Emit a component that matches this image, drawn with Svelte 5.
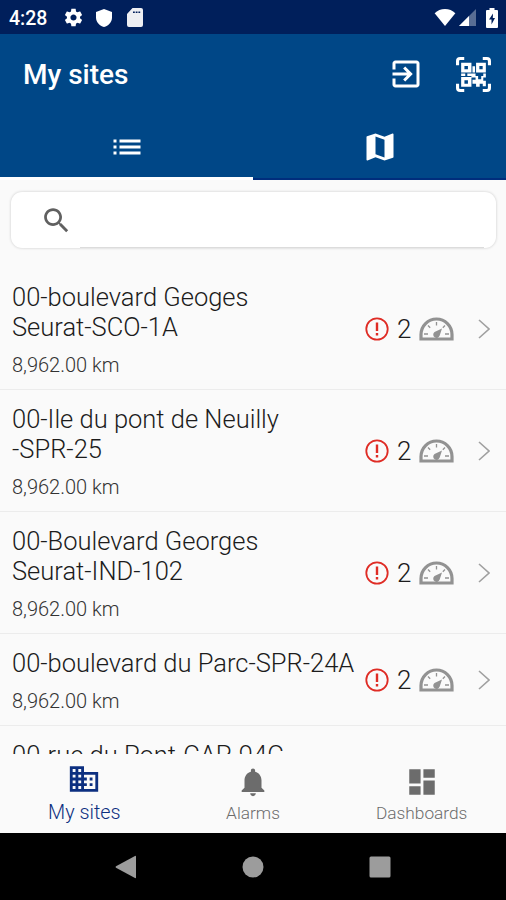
<script>
  const sites = [
    { name: ['00-boulevard Geoges', 'Seurat-SCO-1A'], distance: '8,962.00 km', alarms: 2 },
    { name: ['00-Ile du pont de Neuilly', '-SPR-25'], distance: '8,962.00 km', alarms: 2 },
    { name: ['00-Boulevard Georges', 'Seurat-IND-102'], distance: '8,962.00 km', alarms: 2 },
    { name: ['00-boulevard du Parc-SPR-24A'], distance: '8,962.00 km', alarms: 2 },
    { name: ['00-rue du Pont-CAP-94C'], distance: '8,962.00 km', alarms: 2 }
  ];

  const navItems = [
    {
      label: 'My sites',
      icon: 'M12 7V3H2v18h20V7H12zM6 19H4v-2h2v2zm0-4H4v-2h2v2zm0-4H4V9h2v2zm0-4H4V5h2v2zm4 12H8v-2h2v2zm0-4H8v-2h2v2zm0-4H8V9h2v2zm0-4H8V5h2v2zm10 12h-8v-2h2v-2h-2v-2h2v-2h-2V9h8v10zm-2-8h-2v2h2v-2zm0 4h-2v2h2v-2z'
    },
    {
      label: 'Alarms',
      icon: 'M12 22c1.1 0 2-.9 2-2h-4c0 1.1.89 2 2 2zm6-6v-5c0-3.07-1.64-5.64-4.5-6.32V4c0-.83-.67-1.5-1.5-1.5s-1.5.67-1.5 1.5v.68C7.63 5.36 6 7.92 6 11v5l-2 2v1h16v-1l-2-2z'
    },
    {
      label: 'Dashboards',
      icon: 'M3 13h8V3H3v10zm0 8h8v-6H3v6zm10 0h8V11h-8v10zm0-18v6h8V3h-8z'
    }
  ];

  let activeTab = $state('list');
  let activeNav = $state('My sites');
  let query = $state('');
</script>

<div class="screen">
  <div class="status-bar">
    <span class="time">4:28</span>
    <svg class="gear" viewBox="0 0 24 24"><path d="M19.43 12.98c.04-.32.07-.64.07-.98s-.03-.66-.07-.98l2.11-1.65c.19-.15.24-.42.12-.64l-2-3.46c-.12-.22-.39-.3-.61-.22l-2.49 1c-.52-.4-1.08-.73-1.69-.98l-.38-2.65C14.46 2.18 14.25 2 14 2h-4c-.25 0-.46.18-.49.42l-.38 2.65c-.61.25-1.17.59-1.69.98l-2.49-1c-.23-.09-.49 0-.61.22l-2 3.46c-.13.22-.07.49.12.64l2.11 1.65c-.04.32-.07.65-.07.98s.03.66.07.98l-2.11 1.65c-.19.15-.24.42-.12.64l2 3.46c.12.22.39.3.61.22l2.49-1c.52.4 1.08.73 1.69.98l.38 2.65c.03.24.24.42.49.42h4c.25 0 .46-.18.49-.42l.38-2.65c.61-.25 1.17-.59 1.69-.98l2.49 1c.23.09.49 0 .61-.22l2-3.46c.12-.22.07-.49-.12-.64l-2.11-1.65zM12 15.5c-1.93 0-3.5-1.57-3.5-3.5s1.57-3.5 3.5-3.5 3.5 1.57 3.5 3.5-1.57 3.5-3.5 3.5z" /></svg>
    <svg class="shield" viewBox="0 0 16 18"><path d="M8 0 16 3v5.5C16 13 12.5 16.8 8 18 3.5 16.8 0 13 0 8.5V3z" /></svg>
    <svg class="sd" viewBox="0 0 16 19"><path fill-rule="evenodd" d="M5.5 0H14q2 0 2 2v15q0 2-2 2H2q-2 0-2-2V6zM6 3.5v1.5h1.8V3.5zm2.7 0v1.5h1.8V3.5zm2.7 0v1.5h1.8V3.5z" /></svg>
    <span class="spacer"></span>
    <svg class="wifi" viewBox="0 0 22 18"><path d="M11 18 0 4.5C3 1.5 6.8 0 11 0s8 1.5 11 4.5z" /></svg>
    <svg class="signal" viewBox="0 0 17 17"><path opacity=".35" d="M0 17 17 0v17z" /><path d="M0 17 10 7v10z" /></svg>
    <svg class="battery" viewBox="0 0 12 20"><path fill-rule="evenodd" d="M3.5 0h5v2H11q1 0 1 1v16q0 1-1 1H1q-1 0-1-1V3q0-1 1-1h2.5zM7 5.5 3 11.5h2.500V16.5L9 10H6.800z" /></svg>
  </div>

  <header>
    <div class="app-bar">
      <h1>My sites</h1>
      <button type="button" class="exit" aria-label="Log out">
        <svg viewBox="0 0 24 24"><path d="M10.09 15.59 11.5 17l5-5-5-5-1.41 1.41L12.67 11H3v2h9.67l-2.58 2.59zM19 3H5c-1.11 0-2 .9-2 2v4h2V5h14v14H5v-4H3v4c0 1.1.89 2 2 2h14c1.1 0 2-.9 2-2V5c0-1.1-.9-2-2-2z" /></svg>
      </button>
      <button type="button" class="qr" aria-label="Scan code">
        <svg viewBox="0 0 34 34">
          <path class="frame" d="M1.5 8V4q0-2.5 2.5-2.5h4M26 1.5h4q2.5 0 2.5 2.5v4M32.5 26v4q0 2.5-2.5 2.5h-4M8 32.5H4q-2.5 0-2.5-2.5v-4" />
          <path fill-rule="evenodd" d="M5 5.500h10V15H5zm3.200 3.200v3.200h3.400V8.700zM19.500 5.500h9.500V15h-9.500zm3.200 3.200v3.200h3.200V8.700zM5 19.500h10V29H5zm3.200 3.200v3.200h3.400v-3.200zM16 9h2.500v6H16zM5 16h4v2.500H5zM11 16h8v2.500h2.500v3h3v-3h2V16H29v4h-2.500v3H29v5.500h-3V26h-3v3h-3.500v-3H16v-4h3v-2h-4v-1.500h-4z" />
        </svg>
      </button>
    </div>
    <div class="tabs">
      <button type="button" class:active={activeTab === 'list'} aria-label="List" onclick={() => (activeTab = 'list')}>
        <svg viewBox="0 0 24 24"><path d="M3 13h2v-2H3v2zm0 4h2v-2H3v2zm0-8h2V7H3v2zm4 4h14v-2H7v2zm0 4h14v-2H7v2zM7 7v2h14V7H7z" /></svg>
      </button>
      <button type="button" class:active={activeTab === 'map'} aria-label="Map" onclick={() => (activeTab = 'map')}>
        <svg viewBox="0 0 24 24"><path d="M20.5 3l-.16.03L15 5.1 9 3 3.36 4.9c-.21.07-.36.25-.36.48V20.5c0 .28.22.5.5.5l.16-.03L9 18.9l6 2.1 5.64-1.9c.21-.07.36-.25.36-.48V3.5c0-.28-.22-.5-.5-.5zM15 19l-6-2.11V5l6 2.11V19z" /></svg>
      </button>
    </div>
  </header>

  <main>
    <label class="search">
      <svg viewBox="0 0 24 24"><path d="M15.5 14h-.79l-.28-.27C15.41 12.59 16 11.11 16 9.5 16 5.91 13.09 3 9.5 3S3 5.91 3 9.5 5.91 16 9.5 16c1.61 0 3.09-.59 4.23-1.57l.27.28v.79l5 4.99L20.49 19l-4.99-5zm-6 0C7.01 14 5 11.99 5 9.5S7.01 5 9.5 5 14 7.01 14 9.5 11.99 14 9.5 14z" /></svg>
      <input type="text" aria-label="Search" bind:value={query} />
    </label>

    <ul>
      {#each sites as site}
        <li>
          <div class="info">
            <div class="name">
              {#each site.name as line}
                <span>{line}</span>
              {/each}
            </div>
            <div class="distance">{site.distance}</div>
          </div>
          <div class="state">
            <svg class="alert" viewBox="0 0 24 24">
              <circle cx="12" cy="12" r="10.7" />
              <path d="M12 5.500v8.500M12 16v2.500" />
            </svg>
            <span class="count">{site.alarms}</span>
            <svg class="gauge" viewBox="0 0 35 24">
              <path class="dial" d="M2 22V17.5a15.5 15.5 0 0 1 31 0V22z" />
              <path class="ticks" d="M5 17h4M26 17h4M17.5 5v3.500M9 8.500l2.200 2.200M26 8.500l-2.200 2.200" />
              <path class="needle" d="M23 11.500 20.700 18.500a3.300 3.300 0 1 1-5.200-3.500z" />
            </svg>
            <svg class="chevron" viewBox="0 0 12 20"><path d="M1 1l10 9-10 9" /></svg>
          </div>
        </li>
      {/each}
    </ul>
  </main>

  <nav>
    {#each navItems as item}
      <button type="button" class:active={activeNav === item.label} onclick={() => (activeNav = item.label)}>
        <svg viewBox="0 0 24 24"><path d={item.icon} /></svg>
        <span>{item.label}</span>
      </button>
    {/each}
  </nav>

  <div class="system-bar">
    <svg viewBox="0 0 24 24"><path d="M22 1.5v21q0 1-1 .5L2 12.8q-1-.8 0-1.600L21 1q1-.5 1 .5z" /></svg>
    <svg viewBox="0 0 24 24"><circle cx="12" cy="12" r="10.5" /></svg>
    <svg viewBox="0 0 24 24"><rect x="1.5" y="1.5" width="21" height="21" rx="1.5" /></svg>
  </div>
</div>

<style>
  :global(body) {
    background: #fafafa;
  }

  .screen {
    display: flex;
    flex-direction: column;
    box-sizing: border-box;
    width: 506px;
    height: 900px;
    overflow: hidden;
    background: #fafafa;
    color: #1c1c1c;
    font-family: Roboto, sans-serif;
  }

  svg {
    display: block;
    flex: none;
    fill: currentColor;
  }

  button {
    padding: 0;
    border: 0;
    background: none;
    color: inherit;
    font: inherit;
    cursor: pointer;
  }

  .status-bar {
    display: flex;
    flex: none;
    align-items: center;
    box-sizing: border-box;
    height: 34px;
    padding: 1px 8px 0 9px;
    background: #001f5b;
    color: #fff;
  }

  .time {
    width: 54px;
    padding-top: 1px;
    font-size: 19.5px;
    font-weight: 500;
  }

  .gear {
    width: 21px;
    height: 21px;
    margin-right: 12px;
  }

  .shield {
    width: 16px;
    height: 18px;
    margin-right: 15px;
  }

  .sd {
    width: 16px;
    height: 19px;
    opacity: 0.93;
  }

  .spacer {
    flex: 1;
  }

  .wifi {
    width: 22px;
    height: 17px;
    margin-right: 3px;
  }

  .signal {
    width: 17px;
    height: 17px;
    margin-right: 10px;
  }

  .battery {
    width: 12px;
    height: 20px;
  }

  header {
    flex: none;
    height: 146px;
    background: #004787;
    color: #fff;
  }

  .app-bar {
    display: flex;
    align-items: center;
    height: 80px;
    padding: 0 15px 0 23px;
  }

  h1 {
    flex: 1;
    margin: 0;
    font-size: 28px;
    font-weight: 500;
  }

  .exit {
    margin-right: 32px;
  }

  .exit svg {
    width: 36px;
    height: 36px;
  }

  .qr svg {
    width: 35px;
    height: 35px;
  }

  .frame {
    fill: none;
    stroke: currentColor;
    stroke-width: 3;
  }

  .tabs {
    display: flex;
    height: 66px;
  }

  .tabs button {
    display: flex;
    flex: 1;
    align-items: center;
    justify-content: center;
    padding-top: 2px;
    border-bottom: 2px solid #002d7c;
  }

  .tabs button.active {
    border-bottom: 3px solid #fff;
  }

  .tabs svg {
    width: 36px;
    height: 36px;
  }

  main {
    flex: 1;
    min-height: 0;
    overflow: hidden;
  }

  .search {
    display: flex;
    align-items: center;
    box-sizing: border-box;
    height: 56px;
    margin: 12px 10px 0 11px;
    padding: 0 12px 0 29px;
    border-radius: 11px;
    background: #fff;
    box-shadow: 0 0 3px rgba(0, 0, 0, 0.2);
  }

  .search svg {
    width: 33px;
    height: 33px;
    margin-right: 7px;
    color: #606060;
  }

  .search input {
    flex: 1;
    align-self: stretch;
    min-width: 0;
    padding: 0;
    border: 0;
    border-bottom: 1px solid #dcdcdc;
    outline: 0;
    background: none;
    font: inherit;
    font-size: 22px;
  }

  ul {
    margin: 20px 0 0;
    padding: 0;
    list-style: none;
  }

  li {
    display: flex;
    align-items: center;
    box-sizing: border-box;
    padding: 14px 16px 12px 12px;
    border-bottom: 1px solid #ececec;
  }

  .info {
    flex: 1;
    min-width: 0;
  }

  .name {
    font-size: 25.5px;
    font-weight: 300;
    line-height: 30px;
    white-space: nowrap;
  }

  .name span {
    display: block;
  }

  .distance {
    margin-top: 11px;
    color: #333;
    font-size: 20px;
    font-weight: 300;
    line-height: 24px;
  }

  .state {
    display: flex;
    align-items: center;
    padding-bottom: 2px;
  }

  .alert {
    width: 24px;
    height: 24px;
    margin-right: 8px;
    fill: none;
    stroke: #df2c25;
    stroke-width: 1.8;
  }

  .alert path {
    stroke-width: 2.4;
  }

  .count {
    width: 22px;
    padding-top: 1px;
    font-size: 26px;
    font-weight: 300;
    line-height: 30px;
  }

  .gauge {
    width: 35px;
    height: 24px;
    margin-right: 24px;
    color: #929292;
  }

  .dial,
  .ticks {
    fill: none;
    stroke: currentColor;
    stroke-width: 3.2;
  }

  .ticks {
    stroke-width: 1.3;
  }

  .chevron {
    width: 12px;
    height: 20px;
    fill: none;
    stroke: #a0a0a0;
    stroke-width: 1.6;
  }

  nav {
    display: flex;
    flex: none;
    height: 79px;
    background: #fafafa;
    color: #6c6c6c;
  }

  nav button {
    display: flex;
    flex: 1;
    flex-direction: column;
    align-items: center;
    padding-top: 11px;
    font-size: 17.3px;
    font-weight: 300;
  }

  nav svg {
    width: 34px;
    height: 34px;
  }

  nav span {
    margin-top: 2px;
    line-height: 24px;
  }

  nav button.active {
    padding-top: 8px;
    color: #0c2f80;
    font-size: 19.8px;
  }

  nav button.active span {
    margin-top: 5px;
  }

  .system-bar {
    display: flex;
    flex: none;
    align-items: center;
    justify-content: center;
    gap: 103px;
    height: 67px;
    background: #000;
    color: #9c9c9c;
  }

  .system-bar svg {
    width: 24px;
    height: 24px;
  }
</style>
